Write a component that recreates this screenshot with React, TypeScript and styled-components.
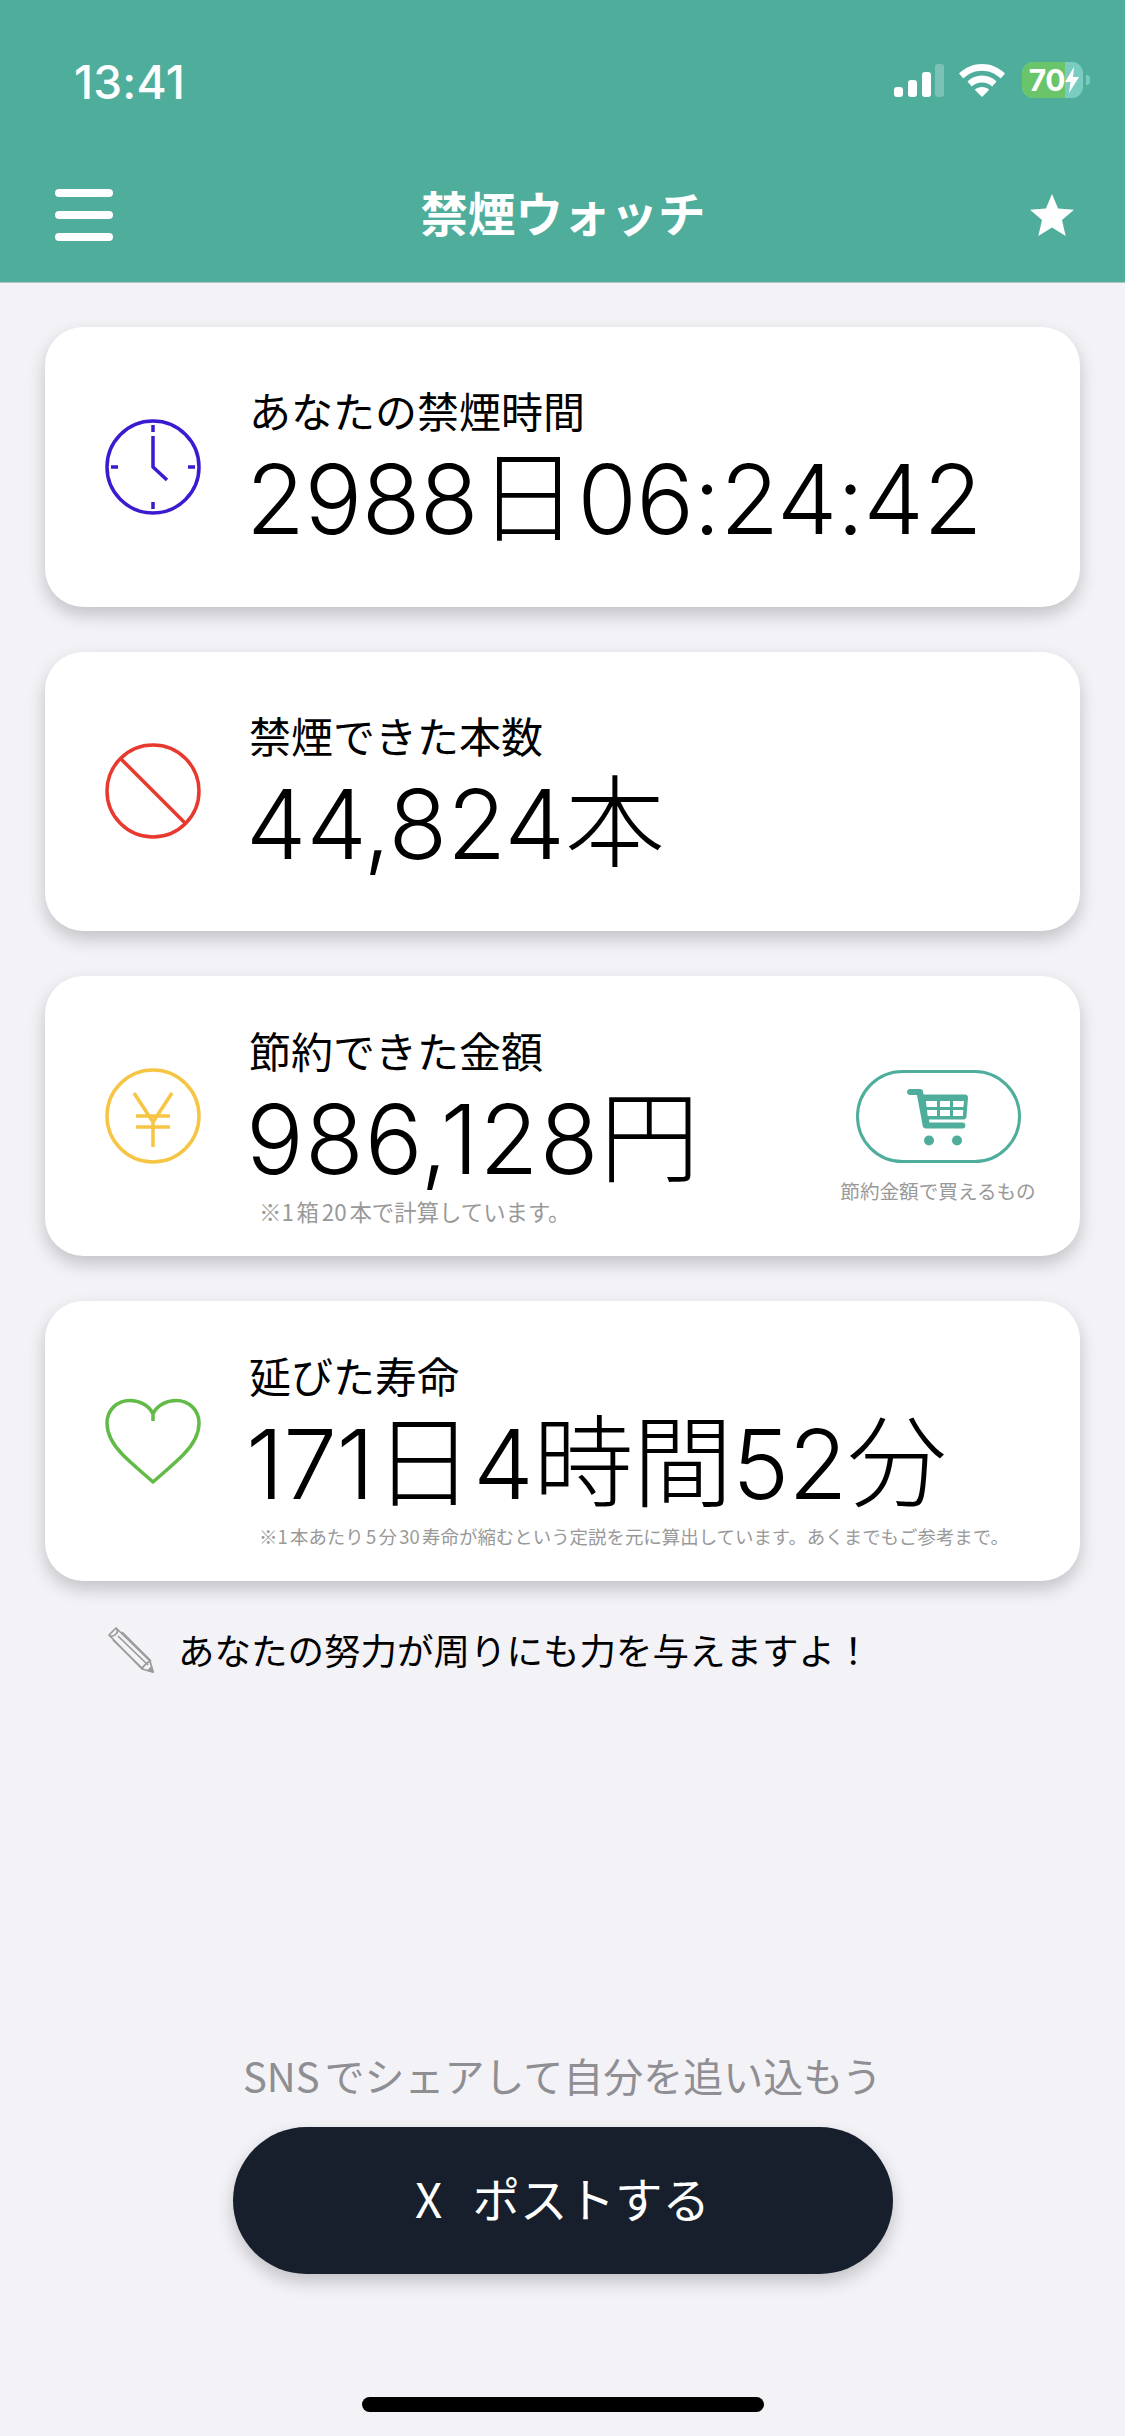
import React from "react";
import styled, { createGlobalStyle } from "styled-components";

const GlobalStyle = createGlobalStyle`
  html, body { margin: 0; padding: 0; background: #f2f2f7; }
  * { box-sizing: border-box; }
  body { font-family: Inter, "Noto Sans CJK JP", sans-serif; }
`;

const Page = styled.div`
  width: 1125px;
  height: 2436px;
  display: flex;
  flex-direction: column;
  background: #f2f2f7;
  overflow: hidden;
`;

const Header = styled.header`
  height: 283px;
  flex: none;
  background: #4fad9c;
  border-bottom: 1px solid #b5c4c1;
  color: #fff;
  display: flex;
  flex-direction: column;
`;

const StatusBar = styled.div`
  height: 164px;
  padding: 57px 35px 0 74px;
  display: flex;
  justify-content: space-between;
  align-items: flex-start;
`;

const Time = styled.div`
  font: 500 46px/50px Inter, sans-serif;
  letter-spacing: 0.2px;
`;

const StatusIcons = styled.div`
  display: flex;
  align-items: center;
  gap: 15px;
  height: 46px;
`;

const Battery = styled.div`
  position: relative;
  width: 61px;
  height: 36px;
  border-radius: 11px;
  overflow: hidden;
  background: #7accc0;
  display: flex;
  align-items: center;
`;

const BatteryFill = styled.div`
  height: 100%;
  width: 43px;
  background: #6ac46a;
  color: #fff;
  font: 700 30px/36px Inter, sans-serif;
  text-align: right;
  letter-spacing: -0.5px;
`;

const BatteryWrap = styled.div`
  display: flex;
  align-items: center;
  gap: 3px;
  margin-left: 2px;
`;

const BatteryNub = styled.div`
  width: 4px;
  height: 10px;
  background: #7accc0;
  border-radius: 0 5px 5px 0;
`;

const NavBar = styled.nav`
  flex: 1;
  display: flex;
  align-items: flex-start;
  justify-content: space-between;
  padding: 25px 51px 0 55px;
`;

const Burger = styled.div`
  width: 58px;
  display: flex;
  flex-direction: column;
  gap: 14px;
`;

const BurgerBar = styled.span`
  display: block;
  height: 8px;
  border-radius: 4px;
  background: #fff;
`;

const NavSide = styled.div`
  flex: 1;
  display: flex;
`;

const Title = styled.h1`
  margin: -7px 0 0 -3px;
  font: 700 47.500px/60px "Noto Sans CJK JP", sans-serif;
  color: #fff;
`;

const StarSlot = styled.div`
  flex: 1;
  margin-top: 5px;
  display: flex;
  justify-content: flex-end;
`;

const CardList = styled.main`
  display: flex;
  flex-direction: column;
  gap: 45px;
  padding: 44px 45px 0;
`;

const Card = styled.section`
  position: relative;
  height: 279.67px;
  border-radius: 38px;
  background: #fff;
  box-shadow: 0 8px 18px rgba(0, 0, 0, 0.2);
  display: flex;
  align-items: center;
  padding-left: 60px;
`;

const IconBox = styled.div`
  width: 96px;
  height: 96px;
  flex: none;
  margin-right: 48px;
  display: flex;
`;

const TextBlock = styled.div`
  flex: 1;
  min-width: 0;
  padding-top: 4px;
  display: flex;
  flex-direction: column;
`;

const Label = styled.div`
  font: 400 42px/50px "Noto Sans CJK JP", sans-serif;
  color: #000;
`;

const Value = styled.div<{ $track?: number }>`
  font: 300 96px/106px Inter, "Noto Sans CJK JP", sans-serif;
  font-feature-settings: "calt" 0;
  letter-spacing: ${(p) => p.$track ?? 0}px;
  color: #000;
  white-space: nowrap;
  margin: 3px 0 0 -3px;
`;

const Unit = styled.span`
  font-family: "Noto Sans CJK JP", sans-serif;
  font-size: 100px;
  font-weight: 300;
`;

const Note = styled.div<{ $size: number }>`
  font: 400 ${(p) => p.$size}px/24px "Noto Sans CJK JP", sans-serif;
  text-autospace: normal;
  color: #999;
  padding-left: 10px;
  margin: 7px 0 -12px;
  white-space: nowrap;
`;

const ShopLink = styled.div`
  position: absolute;
  right: 45px;
  top: 94px;
  width: 194px;
  display: flex;
  flex-direction: column;
  align-items: center;
`;

const CartPill = styled.div`
  width: 165px;
  height: 93px;
  border: 3.500px solid #4fad9c;
  border-radius: 47px;
  display: flex;
  align-items: center;
  justify-content: center;
`;

const ShopCaption = styled.div`
  margin-top: 15px;
  font: 400 19.600px/26px "Noto Sans CJK JP", sans-serif;
  color: #999;
  white-space: nowrap;
`;

const Hint = styled.div`
  display: flex;
  align-items: center;
  gap: 24px;
  margin: 46px 0 0 108px;
  height: 46px;
`;

const HintText = styled.div`
  font: 400 36.500px/46px "Noto Sans CJK JP", sans-serif;
  color: #000;
`;

const ShareArea = styled.div`
  margin-top: auto;
  display: flex;
  flex-direction: column;
  align-items: center;
  padding-bottom: 24px;
`;

const ShareLabel = styled.div`
  font: 400 40px/50px "Noto Sans CJK JP", sans-serif;
  text-autospace: normal;
  color: #8e8e93;
`;

const PostButton = styled.button`
  width: 660px;
  height: 147px;
  margin-top: 27px;
  padding: 0 0 5px;
  border: 0;
  border-radius: 74px;
  background: #161f2b;
  color: #fff;
  box-shadow: 0 8px 18px rgba(0, 0, 0, 0.2);
  font: 400 47.500px/60px "Noto Sans CJK JP", sans-serif;
  word-spacing: 4.500px;
  white-space: pre;
`;

const HomeIndicator = styled.div`
  width: 402px;
  height: 15px;
  margin-top: 123px;
  border-radius: 8px;
  background: #000;
`;

const ClockIcon = () => (
  <svg width="96" height="96" viewBox="0 0 96 96" fill="none" stroke="#3c1ad0" strokeWidth="3.500">
    <circle cx="48" cy="48" r="46" />
    <path d="M48 6v7M48 83v7M6 48h7M83 48h7" />
    <path d="M48 17v31l14 13" />
  </svg>
);

const BanIcon = () => (
  <svg width="96" height="96" viewBox="0 0 96 96" fill="none" stroke="#e8392f" strokeWidth="3.500">
    <circle cx="48" cy="48" r="46" />
    <path d="M15 15l66 66" />
  </svg>
);

const YenIcon = () => (
  <svg width="96" height="96" viewBox="0 0 96 96" fill="none" stroke="#f7c544" strokeWidth="3.500">
    <circle cx="48" cy="48" r="46" />
    <path d="M29 25l19 29 19-29M48 54v25M31 48h34M31 59h34" />
  </svg>
);

const HeartIcon = () => (
  <svg width="96" height="96" viewBox="0 0 96 96" fill="none" stroke="#62bb46" strokeWidth="3.500">
    <path d="M48 21C44 12 34 7.500 25 7.500 12 7.500 2 17 2 30c0 13 7 23 16 32 10 10 20 18 30 27 10-9 20-17 30-27 9-9 16-19 16-32 0-13-10-22.500-23-22.500-9 0-19 4.500-23 13.500Zm0 0v7" strokeLinejoin="round" />
  </svg>
);

const CartIcon = () => (
  <svg width="62" height="58" viewBox="0 0 62 58" fill="#4fad9c">
    <path fillRule="evenodd" d="M3 1h10c2 0 3 1 3 3l.6 2.500H58c2 0 3 1.500 3 3l-1.500 19c-.2 2-1 3-3 3H22l.4 3h33c2 0 3 1 3 3s-1 3-3 3H19c-2 0-3-1-3.400-3L10 7H3C1 7 0 5.500 0 4s1-3 3-3Z M19 13l.6 6h10.400v-6Zm14 0v6h10v-6Zm13 0v6h10.400l.6-6Zm-26 9l.7 6H30v-6Zm13 0v6h10v-6Zm13 0v6h9.800l.5-6Z" />
    <circle cx="22" cy="52.500" r="5" />
    <circle cx="50" cy="52.500" r="5" />
  </svg>
);

const PencilIcon = () => (
  <svg width="46" height="46" viewBox="0 0 46 46" fill="none" stroke="#9a9a9a" strokeWidth="1.700" strokeLinejoin="round">
    <path d="M1 8l7-7 34 33 3 11-11-3Z" />
    <path d="M1 8c2 2 5 1 7-1s2-4 0-6M5 13l30 29M10 9l30 29M14 5l29 29M34 42c1-3 5-6 8-8" />
    <path d="M45 45l-5-1.500 3.500-3.500Z" fill="#9a9a9a" />
  </svg>
);

const SignalIcon = () => (
  <svg width="50" height="33" viewBox="0 0 50 33" fill="#fff">
    <rect x="0" y="23" width="9" height="10" rx="3" />
    <rect x="14" y="16" width="9" height="17" rx="3" />
    <rect x="28" y="8" width="9" height="25" rx="3" />
    <rect x="41" y="0" width="9" height="33" rx="3" fillOpacity="0.25" />
  </svg>
);

const WifiIcon = () => (
  <svg width="46" height="33" viewBox="0 0 46 33" fill="#fff">
    <path d="M23 0c8.500 0 16.500 3.300 23 9.500l-4.300 5C36.500 9.500 30 6.800 23 6.800S9.500 9.500 4.300 14.500L0 9.500C6.500 3.300 14.500 0 23 0Z" />
    <path d="M23 11.500c5.500 0 10.500 2.100 14.500 5.900l-4.300 5c-2.800-2.600-6.300-4-10.200-4s-7.400 1.400-10.200 4l-4.300-5c4-3.800 9-5.900 14.500-5.900Z" />
    <path d="M23 23c2.800 0 5.300 1 7.200 2.800L23 33l-7.200-7.200C17.700 24 20.200 23 23 23Z" />
  </svg>
);

const BoltIcon = () => (
  <svg width="14" height="26" viewBox="0 0 14 26" fill="#fff">
    <path d="M9 0 0 15h5.500L4 26l10-16H8Z" />
  </svg>
);

const StarIcon = () => (
  <svg width="44" height="42" viewBox="0 0 44 42" fill="#fff">
    <path d="M22 0l6.100 14.500L44 15.800 32 26l3.700 16L22 33.500 8.300 42 12 26 0 15.800l15.900-1.300Z" />
  </svg>
);

const CartLink = () => (
  <ShopLink>
    <CartPill><CartIcon /></CartPill>
    <ShopCaption>節約金額で買えるもの</ShopCaption>
  </ShopLink>
);

export default function App() {
  return (
    <>
      <GlobalStyle />
      <Page>
        <Header>
          <StatusBar>
            <Time>13:41</Time>
            <StatusIcons>
              <SignalIcon />
              <WifiIcon />
              <BatteryWrap>
                <Battery>
                  <BatteryFill>70</BatteryFill>
                  <BoltIcon />
                </Battery>
                <BatteryNub />
              </BatteryWrap>
            </StatusIcons>
          </StatusBar>
          <NavBar>
            <NavSide>
              <Burger>
                <BurgerBar />
                <BurgerBar />
                <BurgerBar />
              </Burger>
            </NavSide>
            <Title>禁煙ウォッチ</Title>
            <StarSlot><StarIcon /></StarSlot>
          </NavBar>
        </Header>
        <CardList>
          <Card>
            <IconBox><ClockIcon /></IconBox>
            <TextBlock>
              <Label>あなたの禁煙時間</Label>
              <Value $track={-0.500}>2988<Unit>日</Unit>06:24:42</Value>
            </TextBlock>
          </Card>
          <Card>
            <IconBox><BanIcon /></IconBox>
            <TextBlock>
              <Label>禁煙できた本数</Label>
              <Value>44,824<Unit>本</Unit></Value>
            </TextBlock>
          </Card>
          <Card>
            <IconBox><YenIcon /></IconBox>
            <TextBlock>
              <Label>節約できた金額</Label>
              <Value $track={1.200}>986,128<Unit>円</Unit></Value>
              <Note $size={22.400}>※1箱20本で計算しています。</Note>
            </TextBlock>
            <CartLink />
          </Card>
          <Card>
            <IconBox><HeartIcon /></IconBox>
            <TextBlock>
              <Label>延びた寿命</Label>
              <Value $track={-0.500}>171<Unit>日</Unit>4<Unit>時間</Unit>52<Unit>分</Unit></Value>
              <Note $size={18.450}>※1本あたり5分30寿命が縮むという定説を元に算出しています。あくまでもご参考まで。</Note>
            </TextBlock>
          </Card>
        </CardList>
        <Hint>
          <PencilIcon />
          <HintText>あなたの努力が周りにも力を与えますよ！</HintText>
        </Hint>
        <ShareArea>
          <ShareLabel>SNSでシェアして自分を追い込もう</ShareLabel>
          <PostButton>X  ポストする</PostButton>
          <HomeIndicator />
        </ShareArea>
      </Page>
    </>
  );
}
